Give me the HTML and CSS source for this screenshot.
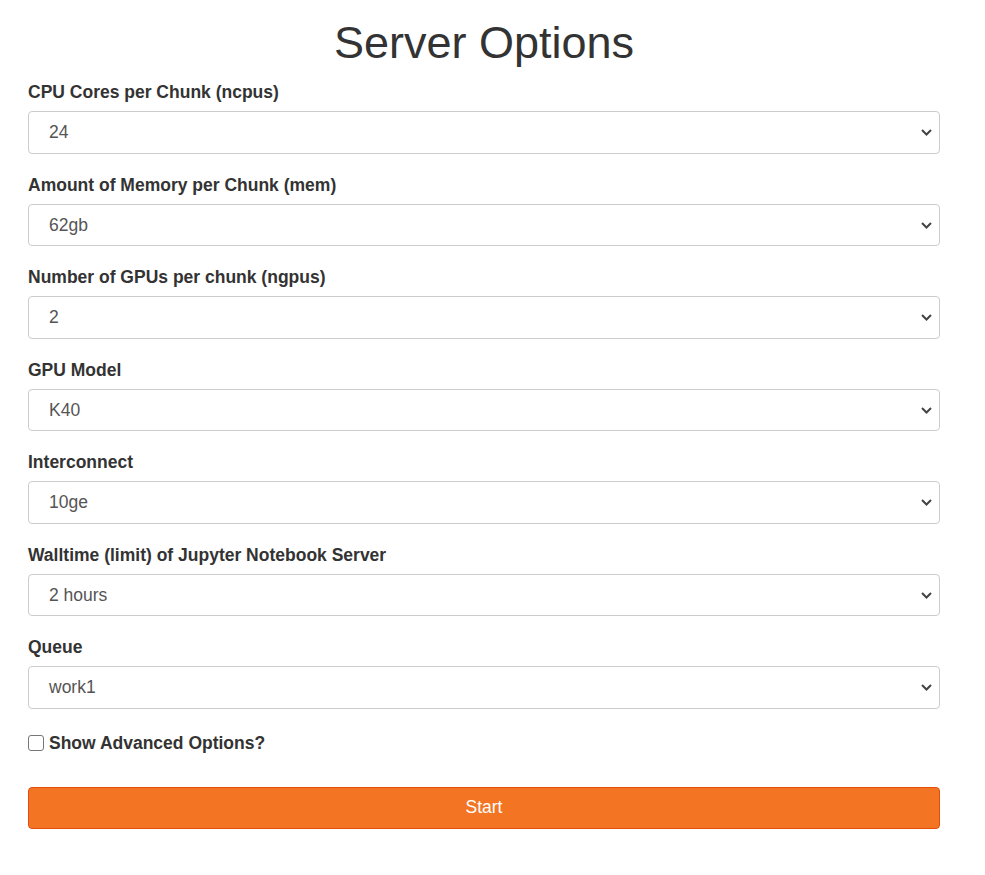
FILE: index.html
```html
<!DOCTYPE html>
<html>
<head>
<meta charset="utf-8">
<link rel="stylesheet" href="styles.css">
</head>
<body>
<div class="container">
  <h1 class="title">Server Options</h1>
  <div class="form">
    <div class="field">
      <label class="label">CPU Cores per Chunk (ncpus)</label>
      <div class="select"><span>24</span><svg class="chev" viewBox="0 0 11 7"><path d="M1 1 L5.5 5.5 L10 1" /></svg></div>
    </div>
    <div class="field">
      <label class="label">Amount of Memory per Chunk (mem)</label>
      <div class="select"><span>62gb</span><svg class="chev" viewBox="0 0 11 7"><path d="M1 1 L5.5 5.5 L10 1" /></svg></div>
    </div>
    <div class="field">
      <label class="label">Number of GPUs per chunk (ngpus)</label>
      <div class="select"><span>2</span><svg class="chev" viewBox="0 0 11 7"><path d="M1 1 L5.5 5.5 L10 1" /></svg></div>
    </div>
    <div class="field">
      <label class="label">GPU Model</label>
      <div class="select"><span>K40</span><svg class="chev" viewBox="0 0 11 7"><path d="M1 1 L5.5 5.5 L10 1" /></svg></div>
    </div>
    <div class="field">
      <label class="label">Interconnect</label>
      <div class="select"><span>10ge</span><svg class="chev" viewBox="0 0 11 7"><path d="M1 1 L5.5 5.5 L10 1" /></svg></div>
    </div>
    <div class="field">
      <label class="label">Walltime (limit) of Jupyter Notebook Server</label>
      <div class="select"><span>2 hours</span><svg class="chev" viewBox="0 0 11 7"><path d="M1 1 L5.5 5.5 L10 1" /></svg></div>
    </div>
    <div class="field">
      <label class="label">Queue</label>
      <div class="select"><span>work1</span><svg class="chev" viewBox="0 0 11 7"><path d="M1 1 L5.5 5.5 L10 1" /></svg></div>
    </div>
    <div class="check-row">
      <span class="checkbox"></span>
      <span class="check-label">Show Advanced Options?</span>
    </div>
    <button class="start">Start</button>
  </div>
</div>
</body>
</html>
```

FILE: styles.css
```css
html, body {
  margin: 0;
  padding: 0;
  background: #ffffff;
}
body {
  font-family: "Liberation Sans", Arial, sans-serif;
  color: #333333;
}
.container {
  width: 912px;
  margin-left: 28px;
  padding-top: 17px;
}
.title {
  margin: 0;
  text-align: center;
  font-weight: 400;
  font-size: 45px;
  line-height: 52px;
  color: #333333;
}
.form {
  display: flex;
  flex-direction: column;
}
.field {
  display: flex;
  flex-direction: column;
  margin-bottom: 19px;
}
.field:first-child {
  margin-top: 11px;
}
.label {
  font-weight: 700;
  font-size: 17.5px;
  line-height: 25px;
  margin-bottom: 6px;
}
.select {
  height: 42.5px;
  box-sizing: border-box;
  border: 1px solid #cccccc;
  border-radius: 4px;
  display: flex;
  align-items: center;
  justify-content: space-between;
  padding: 1px 7px 0 20px;
  font-size: 17.5px;
  color: #555555;
  background: #ffffff;
}
.chev {
  width: 11px;
  height: 7px;
  fill: none;
  stroke: #444444;
  stroke-width: 2;
}
.check-row {
  display: flex;
  align-items: center;
  gap: 5px;
  margin-top: 3px;
  height: 25px;
}
.checkbox {
  width: 16px;
  height: 16px;
  box-sizing: border-box;
  border: 1px solid #767676;
  border-radius: 3px;
  background: #ffffff;
}
.check-label {
  font-weight: 700;
  font-size: 17.5px;
}
.start {
  margin-top: 31px;
  height: 42.5px;
  width: 100%;
  background: #f37524;
  border: 1px solid #e34e0d;
  border-radius: 4px;
  color: #ffffff;
  font-family: "Liberation Sans", Arial, sans-serif;
  font-size: 17.5px;
}
```
